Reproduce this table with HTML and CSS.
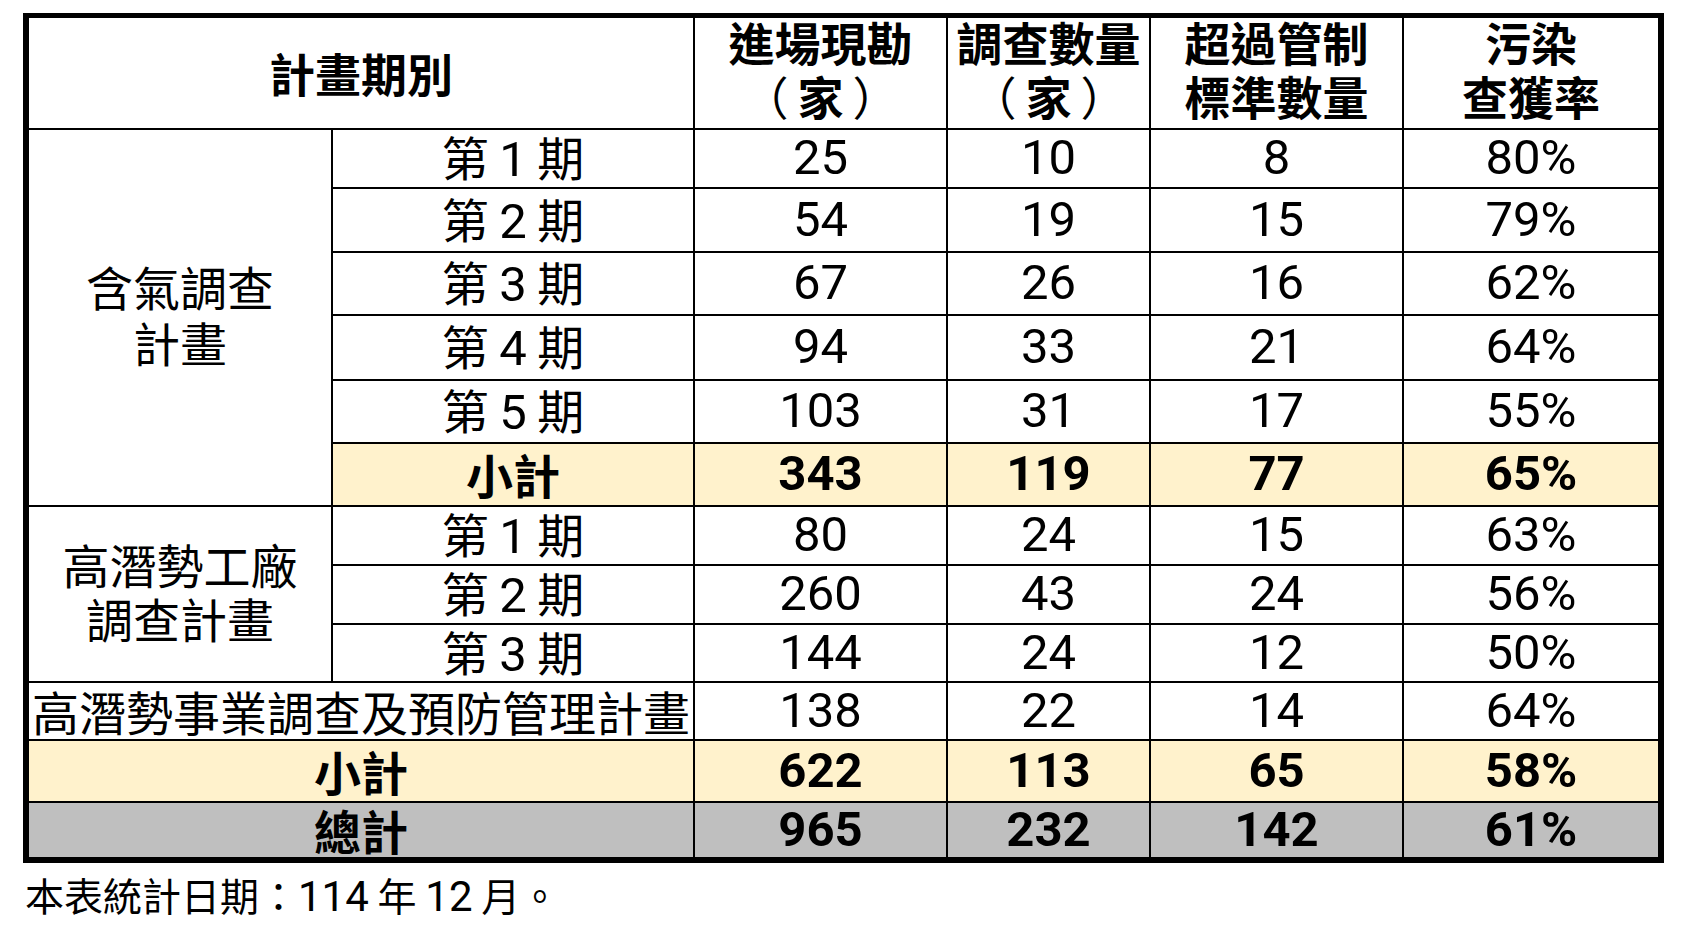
FILE: index.html
```html
<!DOCTYPE html>
<html lang="zh-Hant">
<head>
<meta charset="utf-8">
<title>調查計畫統計表</title>
<link rel="stylesheet" href="styles.css">
</head>
<body>
<main class="page">
  <table class="stats">
    <colgroup>
      <col class="c-group">
      <col class="c-period">
      <col class="c-visit">
      <col class="c-survey">
      <col class="c-over">
      <col class="c-rate">
    </colgroup>
    <thead>
      <tr>
        <th colspan="2" class="title">計畫期別</th>
        <th><div class="hd">進場現勘<br><span class="pl">（</span>家<span class="pr">）</span></div></th>
        <th><div class="hd">調查數量<br><span class="pl">（</span>家<span class="pr">）</span></div></th>
        <th><div class="hd">超過管制<br>標準數量</div></th>
        <th><div class="hd">污染<br>查獲率</div></th>
      </tr>
    </thead>
    <tbody>
      <tr>
        <td rowspan="6" class="group group-gas">含氣調查<br>計畫</td>
        <td>第 <span class="num">1</span> 期</td>
        <td class="num">25</td><td class="num">10</td><td class="num">8</td><td class="num">80%</td>
      </tr>
      <tr>
        <td>第 <span class="num">2</span> 期</td>
        <td class="num">54</td><td class="num">19</td><td class="num">15</td><td class="num">79%</td>
      </tr>
      <tr>
        <td>第 <span class="num">3</span> 期</td>
        <td class="num">67</td><td class="num">26</td><td class="num">16</td><td class="num">62%</td>
      </tr>
      <tr>
        <td>第 <span class="num">4</span> 期</td>
        <td class="num">94</td><td class="num">33</td><td class="num">21</td><td class="num">64%</td>
      </tr>
      <tr>
        <td>第 <span class="num">5</span> 期</td>
        <td class="num">103</td><td class="num">31</td><td class="num">17</td><td class="num">55%</td>
      </tr>
      <tr class="subtotal">
        <td>小計</td>
        <td class="num">343</td><td class="num">119</td><td class="num">77</td><td class="num">65%</td>
      </tr>
      <tr>
        <td rowspan="3" class="group group-plant">高潛勢工廠<br>調查計畫</td>
        <td>第 <span class="num">1</span> 期</td>
        <td class="num">80</td><td class="num">24</td><td class="num">15</td><td class="num">63%</td>
      </tr>
      <tr>
        <td>第 <span class="num">2</span> 期</td>
        <td class="num">260</td><td class="num">43</td><td class="num">24</td><td class="num">56%</td>
      </tr>
      <tr>
        <td>第 <span class="num">3</span> 期</td>
        <td class="num">144</td><td class="num">24</td><td class="num">12</td><td class="num">50%</td>
      </tr>
      <tr>
        <td colspan="2">高潛勢事業調查及預防管理計畫</td>
        <td class="num">138</td><td class="num">22</td><td class="num">14</td><td class="num">64%</td>
      </tr>
      <tr class="subtotal">
        <td colspan="2">小計</td>
        <td class="num">622</td><td class="num">113</td><td class="num">65</td><td class="num">58%</td>
      </tr>
      <tr class="total">
        <td colspan="2">總計</td>
        <td class="num">965</td><td class="num">232</td><td class="num">142</td><td class="num">61%</td>
      </tr>
    </tbody>
  </table>
  <p class="note">本表統計日期：<span class="num">114</span> 年 <span class="num">12</span> 月。</p>
</main>
</body>
</html>
```

FILE: styles.css
```css
html, body {
  margin: 0;
  padding: 0;
  background: #ffffff;
}

body {
  font-family: "Noto Sans CJK TC", "Noto Sans CJK SC", sans-serif;
  color: #000;
}

.page {
  padding: 13px 0 0 23px;
}

.stats {
  border-collapse: collapse;
  table-layout: fixed;
  width: 1641px;
  border: 6px solid #000;
  border-top-width: 5px;
}

.c-group { width: 306px; }
.c-period { width: 362px; }
.c-visit { width: 253px; }
.c-survey { width: 203px; }
.c-over { width: 253px; }
.c-rate { width: 258px; }

.stats th,
.stats td {
  border: 2px solid #000;
  padding: 0;
  text-align: center;
  vertical-align: middle;
  font-family: "Noto Sans CJK TC", "Noto Sans CJK SC", sans-serif;
  font-size: 47px;
  line-height: 40px;
  font-weight: 400;
  white-space: nowrap;
}

.stats th {
  font-size: 46px;
  line-height: 54px;
  font-weight: 700;
  vertical-align: top;
}

.stats th.title {
  vertical-align: middle;
  padding-bottom: 2px;
}

.stats th .hd {
  margin-top: -4px;
}

.stats th .pl {
  font-weight: 400;
  margin-left: -9px;
  margin-right: 9px;
}

.stats th .pr {
  font-weight: 400;
  margin-left: 9px;
  margin-right: -9px;
}

.stats .num {
  font-family: Roboto, "Noto Sans CJK TC", sans-serif;
  font-size: 49px;
  line-height: 40px;
}

.stats td.group {
  background: #fff;
  font-weight: 400;
}

.stats td.group-gas {
  line-height: 56px;
  padding-bottom: 7px;
}

.stats td.group-plant {
  line-height: 54px;
  padding-bottom: 5px;
}

.stats thead tr { height: 113px; }
.stats tbody tr:nth-child(1) { height: 59px; }
.stats tbody tr:nth-child(2) { height: 64px; }
.stats tbody tr:nth-child(3) { height: 63px; }
.stats tbody tr:nth-child(4) { height: 65px; }
.stats tbody tr:nth-child(5) { height: 63px; }
.stats tbody tr:nth-child(6) { height: 63px; }
.stats tbody tr:nth-child(7) { height: 59px; }
.stats tbody tr:nth-child(8) { height: 59px; }
.stats tbody tr:nth-child(9) { height: 58px; }
.stats tbody tr:nth-child(10) { height: 58px; }
.stats tbody tr:nth-child(11) { height: 62px; }
.stats tbody tr:nth-child(12) { height: 58px; }

.subtotal td {
  background: #fff2cc;
  font-weight: 700;
}

.total td {
  background: #bfbfbf;
  font-weight: 700;
}

.note {
  margin: 8px 0 0 2px;
  font-size: 39px;
  line-height: 46px;
}

.note .num {
  font-family: Roboto, "Noto Sans CJK TC", sans-serif;
  font-size: 42px;
  line-height: 40px;
}
```
